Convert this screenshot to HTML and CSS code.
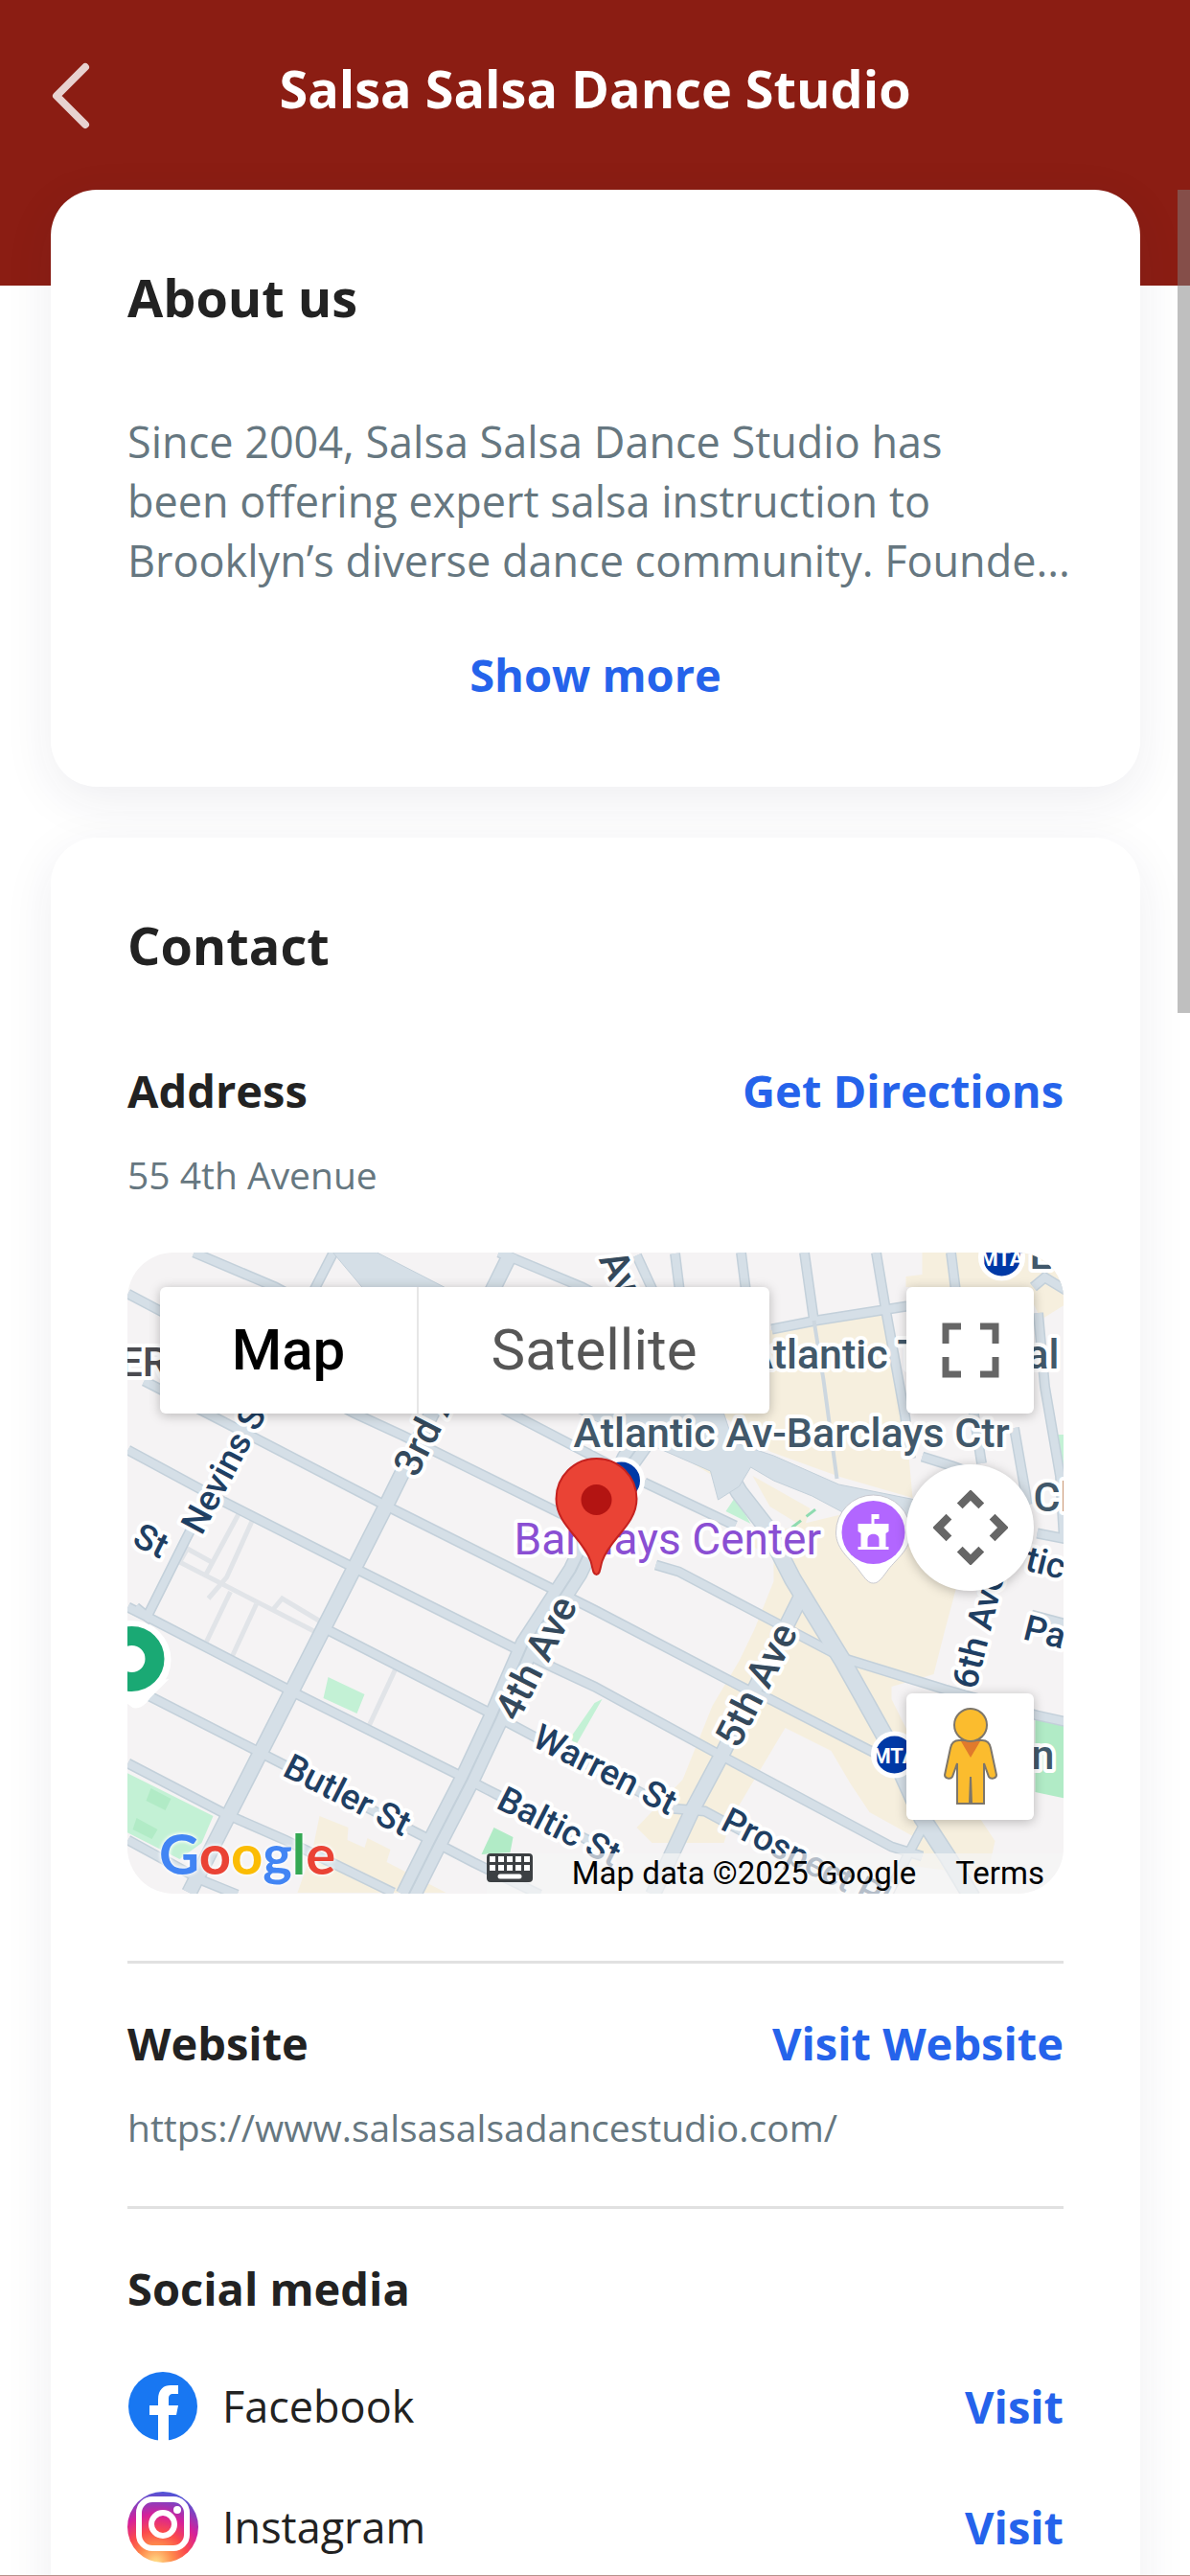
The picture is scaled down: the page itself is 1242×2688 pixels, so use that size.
FILE: index.html
```html
<!DOCTYPE html>
<html lang="en">

<head>
    <meta charset="UTF-8">
    <meta name="viewport" content="width=device-width, initial-scale=1.0">
    <title>Salsa Salsa Dance Studio</title>

    <link rel="stylesheet" href="styles.css">
</head>

<body>
    <div class="app">
        <header class="header">
            <button type="button" class="back" aria-label="Back">
                <svg viewBox="0 0 40 70" fill="none" stroke="currentColor" stroke-width="8" stroke-linecap="round" stroke-linejoin="round">
                    <path d="M35 5 5 35l30 30" />
                </svg>
            </button>
            <h1>Salsa Salsa Dance Studio</h1>
        </header>

        <main class="content">
            <section class="card about">
                <h2>About us</h2>
                <p>Since 2004, Salsa Salsa Dance Studio has<br>been offering expert salsa instruction to<br>Brooklyn’s diverse dance community. Founde...</p>
                <button type="button" class="link">Show more</button>
            </section>

            <section class="card contact">
                <h2>Contact</h2>

                <div class="row">
                    <h3>Address</h3>
                    <a href="#directions" class="link">Get Directions</a>
                </div>
                <p class="detail">55 4th Avenue</p>

                <div class="map">
                    <svg class="map-tiles" viewBox="132 1307 978 669" preserveAspectRatio="xMidYMid slice">
                        <defs>
                            <path id="streets" d="M202 1307l85 36 250 134 123 64M133 1350l34 18 203 107 50 23 160 79 60 30M150 1441l70 36 180 93 180 90M133 1513l100 54 144 73 200 100 43 20 123 67 187 100 32 10M340 1700l170 87 60 32 130 68 35 3 60 32M133 1677l20 10 157 81 170 85 37 19 100 50M140 1762l153 78 150 77 50 26 70 34M133 1840l100 52 64 28 113 55M133 1920l77 42 37 15" />
                            <path id="cross-streets" d="M347 1308l-154 299-40 80-12-10M520 1307l20 8 67 28 60 32M672 1547l95 45M684 1633l24 7 95 50 76 40 107 33 96 27 31 7M580 1660l40 20 159 83 24 10 111 57M664 1310l30 65M704 1308l10 80M773 1307l10 80M839 1307l10 71M914 1307l10 60 20 110 6 45M992 1307l10 80 22 140M1078 1343l12-10 23 14M1083 1370l7 77 16 93 4 67M1058 1490l14 80M805 1387l46-9 95-15M962 1520l32 10 60 22M1082 1600l31 6M966 1900l-16 30-24 47M1076 1685l37 10" />
                            <path id="avenues" d="M533 1307l-130 263-206 405M835 1667l-40 80-40 80-32 60-42 90" />
                            <path id="fourth" d="M690 1475l-34 48-56 117-50 77-33 76-30 64-34 66-28 56" />
                            <path id="flatbush" d="M751 1523l20 34 28 36 28 55 52 85 47 84 36 80 28 43 24 40" />
                        </defs>

                        <rect x="132" y="1307" width="978" height="669" fill="#f5f3f4" />

                        <!-- business areas -->
                        <g fill="#f6efde">
                            <path d="M962 1307h151v53l-27 17-16-34H945v-11l17-2z" />
                            <path d="M803 1388l117-16 24 105 8 86-76-22-72-26-53-40 52-8z" />
                            <path d="M724 1516l26 8 14 28-40-24zM785 1540l60 34-6 20-36-22z" />
                            <path d="M779 1610l50-18 50-12 60 4 63 56-16 60-12 47-44 13v13l50 100 42 24 16 24-8 36-80-10 4-30-47-26-20-30-20-34-48-24-28 47-28 47-8 26h-75l-16-16 48-50 31-77 28-47 16-33 20-50v-24z" />
                            <path d="M333 1895l30 12-1 13 18 8 3-10 24 12-4 13 62 32H310l16-46z" />
                        </g>

                        <!-- parks -->
                        <g fill="#c3f1d5">
                            <path d="M132 1850l90 45-12 28-23 17-55-28zM342 1750l38 18-8 20-35-16z" />
                            <path d="M620 1777l8-4-28 49-5-9zM767 1562l16 28-26-13z" />
                            <path d="M1103 1497h10v43h-6z" />
                        </g>
                        <path fill="#b1ebc6" d="M157 1866l21 11-6 12-20-10zM142 1897l22 12-6 10-20-10zM515 1907l20 10-3 16-30 2zM1080 1792l33 6v79l-33-7z" />

                        <!-- lanes -->
                        <path fill="none" stroke="#e1e4e8" stroke-width="5" d="M187 1630l140 72M187 1630l8-14 27 15M250 1577l-35 65M264 1584l-28 62-19 22M240 1661l-25 52M267 1674l-25 54M284 1680l10-12 40 24M413 1740l-28 60" />

                        <!-- road edges -->
                        <g fill="none" stroke="#c3d0da">
                            <use href="#streets" stroke-width="11" />
                            <use href="#cross-streets" stroke-width="11" />
                            <use href="#avenues" stroke-width="17" />
                            <use href="#fourth" stroke-width="27" />
                            <use href="#flatbush" stroke-width="19" />
                        </g>

                        <!-- road surface -->
                        <g fill="none" stroke="#d5dfe7">
                            <use href="#streets" stroke-width="8" />
                            <use href="#cross-streets" stroke-width="8" />
                            <use href="#avenues" stroke-width="14" />
                            <use href="#fourth" stroke-width="24" />
                            <use href="#flatbush" stroke-width="16" />
                        </g>
                        <use href="#fourth" fill="none" stroke="#c3d0da" stroke-width="2" />
                        <path d="M849 1378l10 62 14 103" fill="none" stroke="#cdd7df" stroke-width="4" />
                        <path fill="#d5dfe7" stroke="#c3d0da" stroke-width="1" d="M347 1307h46l70 36 205 132h87l10 30 42 14 68 30 80 16 40 10v24l-60-7-56-14-32-17-40-16-24-14-12 20-22 14-8-30-320-140z" />
                        <path d="M826 1594l26-20" stroke="#8edbb0" stroke-width="3" stroke-dasharray="12 7" />

                        <!-- street names -->
                        <g class="street">
                            <text transform="translate(210 1603) rotate(-62)">Nevins St</text>
                            <text transform="translate(136 1611) rotate(27)">St</text>
                            <text transform="translate(293 1852) rotate(27)">Butler St</text>
                            <text transform="translate(553 1821) rotate(27)">Warren St</text>
                            <text transform="translate(516 1886) rotate(27)">Baltic St</text>
                            <text transform="translate(750 1908) rotate(27)">Prospect Pl</text>
                            <text transform="translate(1066 1710) rotate(14)">Pacific</text>
                            <text transform="translate(1068 1638) rotate(14)">tic</text>
                            <text transform="translate(1018 1764) rotate(-76)">6th Ave</text>
                        </g>
                        <g class="avenue">
                            <text transform="translate(434 1543) rotate(-63)">3rd Ave</text>
                            <text transform="translate(540 1798) rotate(-63)">4th Ave</text>
                            <text transform="translate(770 1826) rotate(-63)">5th Ave</text>
                            <text transform="translate(624 1314) rotate(63)">Av</text>
                        </g>
                        <g class="station">
                            <text x="598" y="1510">Atlantic Av-Barclays Ctr</text>
                            <text x="778" y="1428">Atlantic Terminal</text>
                            <text x="1078" y="1577">Cl</text>
                            <text x="1076" y="1846">n</text>
                            <text x="1074" y="1324">L</text>
                            <text class="district" x="124" y="1436">ER</text>
                        </g>

                        <!-- subway badges -->
                        <g class="subway">
                            <circle cx="1045" cy="1312" r="22" />
                            <circle cx="648" cy="1545" r="22" />
                            <circle cx="933" cy="1831" r="22" />
                            <text x="1045" y="1321">MTA</text>
                            <text x="933" y="1840">MTA</text>
                        </g>

                        <!-- Barclays Center -->
                        <text class="venue" x="536" y="1622">Barclays Center</text>
                        <path fill="#fff" stroke="#c9c9d0" stroke-width="1" d="M911 1652c-5 0-8-4-14-12-8-12-25-22-25-41a39 39 0 0 1 78 0c0 19-17 29-25 41-6 8-9 12-14 12z" />
                        <circle cx="911" cy="1599" r="33" fill="#b266ff" />
                        <path fill="#fff" d="M909 1580h8v5h-5v5h15v8l-3 2v14h3v3h-32v-3h3v-14l-3-2v-8h14z" />
                        <path fill="#b266ff" d="M905 1614v-8c0-7 12-7 12 0v8z" />

                        <circle cx="137" cy="1732" r="41" fill="#fff" />
                        <path fill="#fff" d="M110 1760l28 22c8 2 14-4 18-10l20-20z" />
                        <circle cx="137" cy="1731" r="24" fill="none" stroke="#1aa974" stroke-width="20" />

                        <!-- marker -->
                        <path fill="#ea4335" stroke="#c5221f" stroke-width="2" d="M622 1643c-4 0-4-8-6-14-8-24-36-38-36-65a42 42 0 0 1 84 0c0 27-28 41-36 65-2 6-2 14-6 14z" />
                        <circle cx="622" cy="1565" r="16" fill="#b31412" />
                    </svg>

                    <div class="map-type">
                        <button type="button" class="active">Map</button>
                        <button type="button">Satellite</button>
                    </div>
                    <button type="button" class="control fullscreen" aria-label="Toggle fullscreen view">
                        <svg viewBox="0 0 60 60" fill="none" stroke="#666" stroke-width="7">
                            <path d="M20 5H4v18M40 5h16v18M20 55H4V37M40 55h16V37" />
                        </svg>
                    </button>
                    <button type="button" class="control camera" aria-label="Map camera controls">
                        <svg viewBox="0 0 76 76" fill="none" stroke="#666" stroke-width="8">
                            <path d="M27 16 38 5l11 11M27 60l11 11 11-11M16 27 5 38l11 11M60 27l11 11-11 11" />
                        </svg>
                    </button>
                    <button type="button" class="control pegman" aria-label="Drag Pegman onto the map to open Street View">
                        <svg viewBox="0 0 56 102" fill="#fbbc2e" stroke="#7d766a" stroke-width="2">
                            <path d="M16 34h24c6 0 8 3 9 8l6 28c0 4-6 5-8 2l-5-14v42H29l-1-28-1 28H14V58L9 72c-2 3-8 2-8-2l6-28c1-5 3-8 9-8z" />
                            <path d="M18 35h20L28 52z" fill="#e07a2c" stroke="none" />
                            <circle cx="28" cy="18" r="17" />
                        </svg>
                    </button>

                    <div class="google" aria-label="Google"><span class="blue">G</span><span class="red">o</span><span class="yellow">o</span><span class="blue">g</span><span class="green">l</span><span class="red">e</span></div>

                    <div class="attribution">
                        <button type="button" aria-label="Keyboard shortcuts">
                            <svg viewBox="0 0 48 30">
                                <rect width="48" height="30" rx="4" fill="#3c4043" />
                                <path d="M3 6h42M3 15h42" stroke="#fff" stroke-width="6" stroke-dasharray="6 3" />
                                <path d="M14 24h20" stroke="#fff" stroke-width="5" stroke-linecap="round" />
                            </svg>
                        </button>
                        <span>Map data ©2025 Google</span>
                        <a href="#terms">Terms</a>
                    </div>
                </div>

                <hr>

                <div class="row">
                    <h3>Website</h3>
                    <a href="#website" class="link">Visit Website</a>
                </div>
                <p class="detail">https://www.salsasalsadancestudio.com/</p>

                <hr>

                <h3>Social media</h3>
                <ul class="social">
                    <li>
                        <svg viewBox="0 0 74 74">
                            <circle cx="37" cy="37" r="36" fill="#1877f2" />
                            <path fill="#fff" d="M32 73V46h-9V36h9v-6c0-11 6-15 13-15h8v9h-5c-4 0-5 2-5 5v7h10l-2 10h-8v27a36 36 0 0 1-11 0z" />
                        </svg>
                        <span>Facebook</span>
                        <a href="#facebook" class="link">Visit</a>
                    </li>
                    <li>
                        <svg viewBox="0 0 74 74" fill="none">
                            <defs>
                                <radialGradient id="insta" cx=".4" cy="1" r="1">
                                    <stop offset="0" stop-color="#ffe08a" />
                                    <stop offset=".25" stop-color="#fe8a4c" />
                                    <stop offset=".45" stop-color="#fb4a4c" />
                                    <stop offset=".68" stop-color="#d6209a" />
                                    <stop offset="1" stop-color="#4f55d8" />
                                </radialGradient>
                            </defs>
                            <circle cx="37" cy="37" r="37" fill="url(#insta)" />
                            <rect x="12" y="8" width="50" height="51" rx="14" stroke="#fff" stroke-width="6" />
                            <circle cx="37" cy="34" r="12" stroke="#fff" stroke-width="6" />
                            <circle cx="52" cy="19" r="4" fill="#fff" />
                        </svg>
                        <span>Instagram</span>
                        <a href="#instagram" class="link">Visit</a>
                    </li>
                </ul>
            </section>
        </main>

        <div class="scrollbar"></div>
    </div>
</body>

</html>
```
FILE: styles.css
```css
* {
    box-sizing: border-box;
}

body {
    margin: 0;
    background: #fff;
    color: #222;
    font-family: "Open Sans", "Noto Sans", sans-serif;
    font-size: 45px;
    line-height: 62px;
}

h1, h2, h3, p, ul {
    margin: 0;
    padding: 0;
    font-size: inherit;
}

button {
    padding: 0;
    border: none;
    background: none;
    font: inherit;
    cursor: pointer;
}

svg {
    display: block;
}

.app {
    position: relative;
    height: 100vh;
    overflow: hidden;
    border-bottom: 1px solid #b8928d;
}

/* header */

.header {
    position: relative;
    height: 298px;
    padding-top: 60px;
    background: #8b1d13;
    color: #fff;
    text-align: center;
}

h1 {
    font-size: 54px;
    font-weight: 700;
    line-height: 64px;
}

.back {
    position: absolute;
    left: 54px;
    top: 65px;
    color: #e8d2d0;
}

.back svg {
    width: 40px;
    height: 70px;
}

/* cards */

.content {
    position: relative;
    display: flex;
    flex-direction: column;
    gap: 53px;
    margin-top: -100px;
    padding: 0 52px 0 53px;
}

.card {
    padding: 80px 80px 85px;
    border-radius: 48px;
    background: #fff;
    box-shadow: 0 14px 52px rgba(40, 40, 80, 0.08);
}

h2 {
    margin-bottom: 88px;
    font-size: 54px;
    font-weight: 700;
    line-height: 64px;
}

h3 {
    font-size: 47px;
    font-weight: 700;
    line-height: 64px;
}

.link {
    color: #2563eb;
    font-size: 47px;
    font-weight: 700;
    line-height: 64px;
    text-decoration: none;
}

.about p {
    margin-bottom: 56px;
    color: #667780;
    white-space: nowrap;
}

.about .link {
    display: block;
    margin: 0 auto;
}

.row {
    display: flex;
    justify-content: space-between;
}

.detail {
    margin-top: 28px;
    color: #667780;
    font-size: 39px;
    line-height: 56px;
}

hr {
    height: 3px;
    margin: 54px 0 51px;
    border: none;
    background: #e1e1e1;
}

/* map */

.map {
    position: relative;
    height: 669px;
    margin: 53px 0 70px;
    overflow: hidden;
    border-radius: 48px;
    font-family: Roboto, sans-serif;
}

.map-tiles {
    width: 100%;
    height: 100%;
}

.map-tiles text {
    fill: #41586a;
    stroke: #fff;
    stroke-width: 8px;
    stroke-linejoin: round;
    paint-order: stroke;
    font-weight: 500;
}

.map-tiles .street text {
    fill: #1f3f63;
    font-size: 37px;
}

.map-tiles .avenue text {
    fill: #34495c;
    font-size: 41px;
}

.map-tiles .station text {
    font-size: 43px;
}

.map-tiles .station .district {
    fill: #4b4b50;
}

.map-tiles .venue {
    fill: #8a4fd3;
    font-size: 46px;
    font-weight: 400;
}

.subway circle {
    fill: #0039a6;
    stroke: #fff;
    stroke-width: 5px;
}

.map-tiles .subway text {
    fill: #fff;
    stroke: none;
    font-size: 22px;
    font-weight: 700;
    text-anchor: middle;
}

.map-type {
    position: absolute;
    left: 34px;
    top: 36px;
    display: flex;
    height: 132px;
    border-radius: 6px;
    background: #fff;
    box-shadow: 0 2px 12px rgba(0, 0, 0, 0.25);
    font-size: 60px;
}

.map-type button {
    width: 368px;
    border-left: 2px solid #e6e6e6;
    color: #565656;
}

.map-type .active {
    width: 268px;
    border: none;
    color: #000;
    font-weight: 500;
}

.control {
    position: absolute;
    right: 31px;
    display: flex;
    justify-content: center;
    align-items: center;
    width: 133px;
    height: 132px;
    border-radius: 6px;
    background: #fff;
    box-shadow: 0 2px 12px rgba(0, 0, 0, 0.25);
}

.fullscreen {
    top: 36px;
}

.fullscreen svg {
    width: 60px;
    height: 60px;
}

.camera {
    top: 221px;
    border-radius: 50%;
}

.camera svg {
    width: 78px;
    height: 78px;
}

.pegman {
    top: 460px;
}

.pegman svg {
    width: 56px;
    height: 102px;
}

.google {
    position: absolute;
    left: 33px;
    bottom: 6px;
    font-family: Lato, sans-serif;
    font-size: 58px;
    font-weight: 700;
    line-height: 72px;
    text-shadow: 0 0 4px #fff, 0 0 4px #fff;
}

.blue {
    color: #4285f4;
}

.red {
    color: #ea4335;
}

.yellow {
    color: #fbbc04;
}

.green {
    color: #34a853;
}

.attribution {
    position: absolute;
    right: 0;
    bottom: 0;
    display: flex;
    align-items: center;
    gap: 41px;
    height: 42px;
    padding-right: 20px;
    background: rgba(245, 245, 245, 0.7);
    color: #000;
    font-size: 33px;
    line-height: 42px;
}

.attribution a {
    color: inherit;
    text-decoration: none;
}

.attribution svg {
    width: 48px;
    height: 30px;
    margin-bottom: 12px;
}

/* social media */

.social {
    margin-top: 28px;
    list-style: none;
}

.social li {
    display: flex;
    align-items: center;
    height: 126px;
}

.social svg {
    width: 74px;
    height: 74px;
    margin-right: 25px;
}

.social .link {
    margin-left: auto;
}

/* thumb of the page scroller */

.scrollbar {
    position: absolute;
    top: 198px;
    right: 0;
    width: 13px;
    height: 859px;
    background: rgba(128, 128, 128, 0.5);
}
```
